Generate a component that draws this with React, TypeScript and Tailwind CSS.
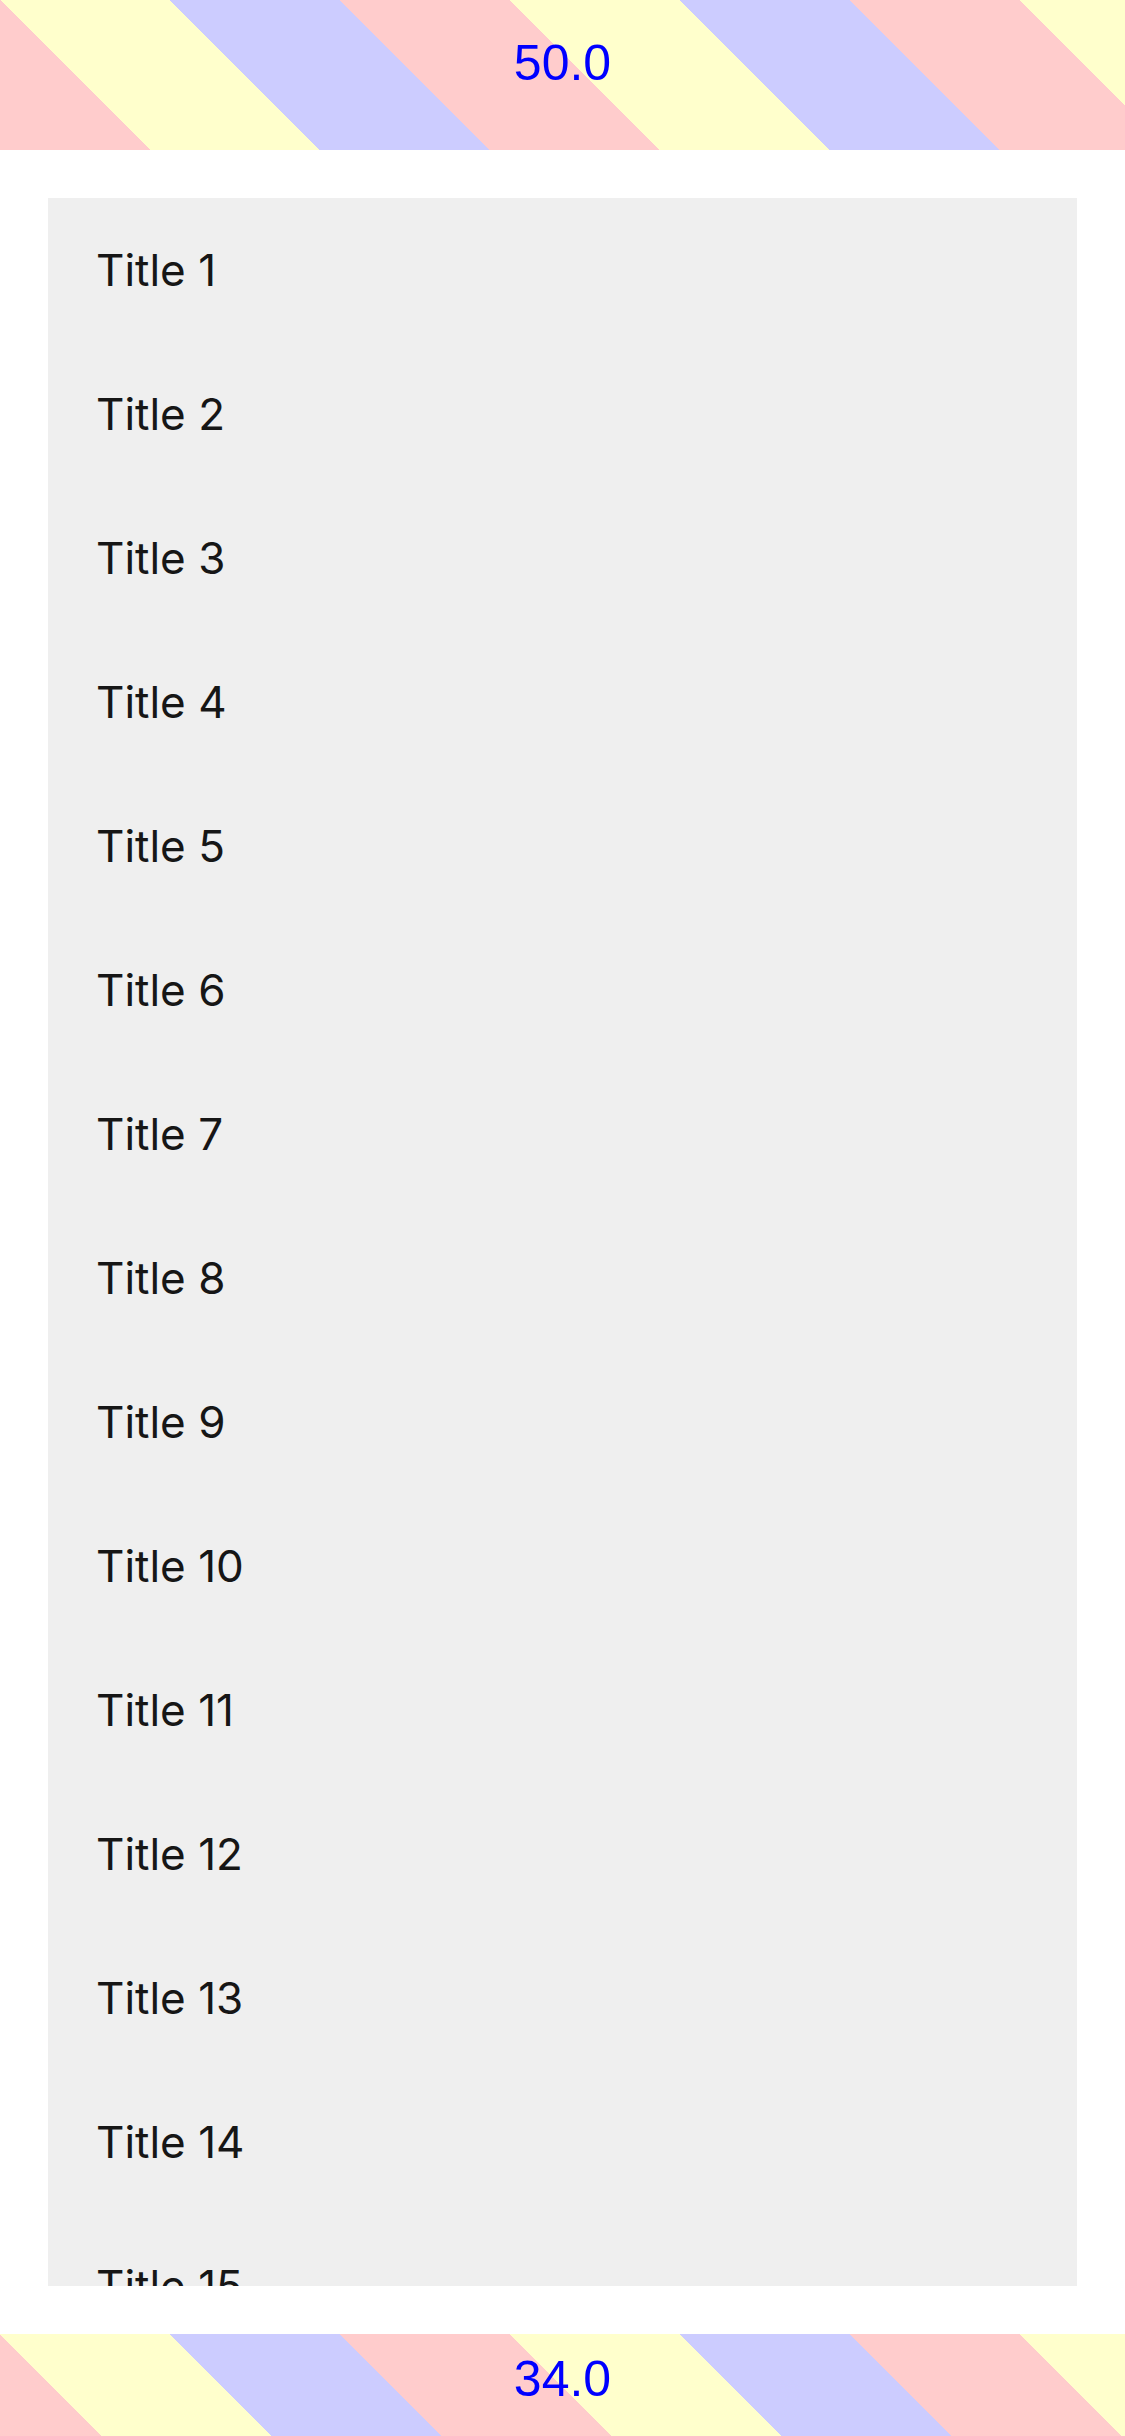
import React from 'react';

const titles = Array.from({ length: 15 }, (_, i) => `Title ${i + 1}`);

const App = () => {
  return (
    <div className="flex flex-col w-[1125px] h-[2436px] bg-white overflow-hidden">
      <header className="h-[150px] shrink-0 bg-[repeating-linear-gradient(45deg,#ffcccc_0px,#ffcccc_106.07px,#ffffcc_106.07px,#ffffcc_226.27px,#ccccff_226.27px,#ccccff_346.48px,#ffcccc_346.48px,#ffcccc_360.62px)]">
        <p className="pt-[26px] text-center text-[50px] text-[#0000ff] font-['Liberation_Sans',Arial,sans-serif]">50.0</p>
      </header>

      <main className="flex-1 p-[48px] min-h-0">
        <ul className="h-full bg-[#efefef] overflow-hidden">
          {titles.map((t) => (
            <li key={t} className="h-[144px] flex items-center px-[48px] text-[44px] text-[#161616] font-['Inter',sans-serif]">
              {t}
            </li>
          ))}
        </ul>
      </main>

      <footer className="h-[102px] shrink-0 bg-[repeating-linear-gradient(45deg,#ffcccc_0px,#ffcccc_72.12px,#ffffcc_72.12px,#ffffcc_192.33px,#ccccff_192.33px,#ccccff_312.54px,#ffcccc_312.54px,#ffcccc_360.62px)]">
        <p className="pt-[8px] text-center text-[50px] text-[#0000ff] font-['Liberation_Sans',Arial,sans-serif]">34.0</p>
      </footer>
    </div>
  );
};

export default App;
